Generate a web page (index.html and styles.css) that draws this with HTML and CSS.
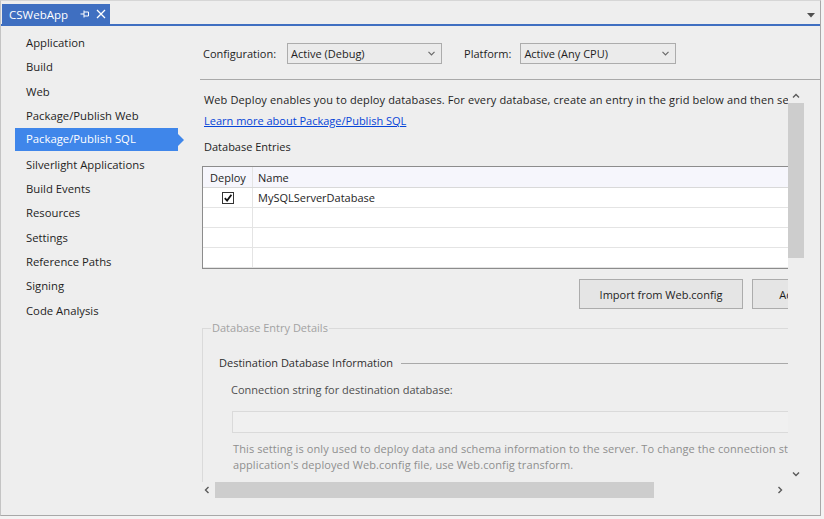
FILE: index.html
```html
<!DOCTYPE html>
<html>
<head>
<meta charset="utf-8">
<link rel="stylesheet" href="styles.css">
</head>
<body>
<div class="window">
  <div class="tabstrip">
    <div class="tab">
      <span class="tab-title">CSWebApp</span>
      <svg class="tab-pin" width="10" height="10" viewBox="0 0 10 10"><path d="M0.5 5h3.5M4 1.5v7M4 3h4.5v4H4" fill="none" stroke="#fff" stroke-width="1"/></svg>
      <svg class="tab-close" width="10" height="10" viewBox="0 0 10 10"><path d="M1 1l8 8M9 1l-8 8" fill="none" stroke="#fff" stroke-width="1.3"/></svg>
    </div>
    <div class="tabstrip-fill"></div>
    <svg class="tab-menu" width="8" height="5" viewBox="0 0 8 5"><path d="M0 0h8L4 4.5z" fill="#505050"/></svg>
  </div>
  <div class="body">
    <nav class="nav">
      <div class="nav-item">Application</div>
      <div class="nav-item">Build</div>
      <div class="nav-item">Web</div>
      <div class="nav-item">Package/Publish Web</div>
      <div class="nav-item selected">Package/Publish SQL</div>
      <div class="nav-item">Silverlight Applications</div>
      <div class="nav-item">Build Events</div>
      <div class="nav-item">Resources</div>
      <div class="nav-item">Settings</div>
      <div class="nav-item">Reference Paths</div>
      <div class="nav-item">Signing</div>
      <div class="nav-item">Code Analysis</div>
    </nav>
    <main class="main">
      <div class="config">
        <span class="config-label">Configuration:</span>
        <div class="select select-config"><span>Active (Debug)</span><svg width="7" height="5" viewBox="0 0 7 5"><path d="M0.5 0.8l3 3 3-3" fill="none" stroke="#6a6a6a" stroke-width="1.2"/></svg></div>
        <span class="config-label platform">Platform:</span>
        <div class="select select-platform"><span>Active (Any CPU)</span><svg width="7" height="5" viewBox="0 0 7 5"><path d="M0.5 0.8l3 3 3-3" fill="none" stroke="#6a6a6a" stroke-width="1.2"/></svg></div>
      </div>
      <div class="separator"></div>
      <div class="scroller">
        <div class="viewport">
          <div class="content">
            <p class="intro">Web Deploy enables you to deploy databases. For every database, create an entry in the grid below and then set its properties below.</p>
            <a class="learn" href="#">Learn more about Package/Publish SQL</a>
            <p class="section-title">Database Entries</p>
            <div class="grid">
              <div class="grid-row grid-head"><div class="c-deploy">Deploy</div><div class="c-name">Name</div></div>
              <div class="grid-row"><div class="c-deploy"><span class="check"><svg width="10" height="10" viewBox="0 0 10 10"><path d="M1.8 5.2l2.3 2.4L8.4 1.8" fill="none" stroke="#111" stroke-width="1.8"/></svg></span></div><div class="c-name">MySQLServerDatabase</div></div>
              <div class="grid-row"><div class="c-deploy"></div><div class="c-name"></div></div>
              <div class="grid-row"><div class="c-deploy"></div><div class="c-name"></div></div>
              <div class="grid-row"><div class="c-deploy"></div><div class="c-name"></div></div>
            </div>
            <div class="buttons">
              <button class="btn btn-import">Import from Web.config</button>
              <button class="btn btn-add">Add</button>
            </div>
            <fieldset class="details">
              <legend>Database Entry Details</legend>
              <div class="sub-head"><span>Destination Database Information</span><span class="sub-line"></span></div>
              <p class="conn-label">Connection string for destination database:</p>
              <div class="conn-input"></div>
              <p class="help">This setting is only used to deploy data and schema information to the server. To change the connection string in the<br>application's deployed Web.config file, use Web.config transform.</p>
            </fieldset>
          </div>
        </div>
        <div class="vscroll">
          <svg class="arrow" width="8" height="6" viewBox="0 0 8 6"><path d="M1 4.5l3-3 3 3" fill="none" stroke="#5a5a5a" stroke-width="1.4"/></svg>
          <div class="vthumb"></div>
          <div class="vspace"></div>
          <svg class="arrow" width="8" height="6" viewBox="0 0 8 6"><path d="M1 1.5l3 3 3-3" fill="none" stroke="#5a5a5a" stroke-width="1.4"/></svg>
        </div>
        <div class="hscroll">
          <svg class="harrow" width="6" height="8" viewBox="0 0 6 8"><path d="M4.5 1l-3 3 3 3" fill="none" stroke="#5a5a5a" stroke-width="1.4"/></svg>
          <div class="hthumb"></div>
          <div class="hspace"></div>
          <svg class="harrow" width="6" height="8" viewBox="0 0 6 8"><path d="M1.5 1l3 3-3 3" fill="none" stroke="#5a5a5a" stroke-width="1.4"/></svg>
        </div>
        <div class="corner"></div>
      </div>
    </main>
  </div>
</div>
</body>
</html>
```
FILE: styles.css
```css
html, body {
  margin: 0;
  padding: 0;
  background: #f3f3f3;
}
body {
  font-family: "Open Sans", "Liberation Sans", sans-serif;
  font-size: 11px;
  color: #1e1e1e;
}
p { margin: 0; }

.window {
  box-sizing: border-box;
  width: 821px;
  height: 516px;
  border-top: 1px solid #d6d6d6;
  border-left: 1px solid #c4c4c4;
  border-right: 1px solid #a8a8a8;
  border-bottom: 1px solid #a8a8a8;
  background: #eeeeee;
  display: flex;
  flex-direction: column;
  overflow: hidden;
}

/* tab strip */
.tabstrip {
  display: flex;
  align-items: flex-end;
  height: 20px;
  padding: 3px 0 0 1px;
  border-bottom: 2px solid #3f6fc1;
  flex-shrink: 0;
}
.tab {
  width: 108px;
  height: 20px;
  background: #3f6fc1;
  color: #fff;
  display: flex;
  align-items: center;
  font-size: 11.5px;
}
.tab-title { margin-left: 7px; }
.tab-pin { margin-left: 12px; }
.tab-close { margin-left: 6px; }
.tabstrip-fill { flex: 1; }
.tab-menu { align-self: center; margin: 3px 5px 0 0; }

/* body */
.body {
  flex: 1;
  display: flex;
  min-height: 0;
}

/* navigation */
.nav {
  width: 189px;
  flex-shrink: 0;
  padding-top: 5px;
  font-size: 11.3px;
}
.nav-item {
  position: relative;
  height: 24.35px;
  line-height: 24px;
  margin-left: 14px;
  width: 163px;
  padding-left: 11px;
  box-sizing: border-box;
  color: #1e1e1e;
  white-space: nowrap;
}
.nav-item.selected {
  background: #3f86ea;
  color: #fff;
  height: 23px;
  line-height: 22px;
  margin-top: 0;
  margin-bottom: 1.35px;
}
.nav-item.selected::after {
  content: "";
  position: absolute;
  right: -6px;
  top: 5.5px;
  border-top: 6px solid transparent;
  border-bottom: 6px solid transparent;
  border-left: 6px solid #3f86ea;
}

/* main */
.main {
  flex: 1;
  padding-left: 10px;
  min-width: 0;
}
.config {
  display: flex;
  align-items: center;
  height: 21px;
  padding: 17px 0 0 3px;
}
.config-label { margin-right: 11px; }
.config-label.platform { margin-left: 22px; margin-right: 9px; }
.select {
  box-sizing: border-box;
  height: 21px;
  border: 1px solid #acacac;
  background: #ebebeb;
  display: flex;
  align-items: center;
  justify-content: space-between;
  padding: 0 6px 0 3px;
}
.select-config { width: 155px; }
.select-platform { width: 156px; }

.separator {
  margin-top: 15px;
  border-top: 1px solid #a9a9a9;
}

/* scroller */
.scroller {
  margin-top: 8px;
  width: 604px;
  height: 410px;
  display: grid;
  grid-template-columns: 588px 16px;
  grid-template-rows: 394px 16px;
}
.viewport {
  overflow: hidden;
  position: relative;
}
.content {
  width: 720px;
  padding-top: 4px;
}
.intro {
  margin-left: 4px;
  line-height: 16px;
  white-space: nowrap;
  letter-spacing: 0.13px;
}
.learn {
  display: inline-block;
  margin: 5px 0 0 4px;
  line-height: 16px;
  color: #0645d8;
  text-decoration: underline;
}
.section-title {
  margin: 10px 0 0 4px;
  line-height: 16px;
}

/* grid */
.grid {
  margin: 11px 0 0 2px;
  width: 710px;
  height: 103px;
  box-sizing: border-box;
  border: 1px solid #8c8c8c;
  background: #fff;
}
.grid-row {
  display: flex;
  height: 19px;
  border-bottom: 1px solid #e4e4e4;
}
.grid-row.grid-head {
  height: 20px;
  background: #f6f6fc;
  border-bottom: 1px solid #d9d9d9;
}
.c-deploy {
  width: 49px;
  border-right: 1px solid #e4e4e4;
  display: flex;
  align-items: center;
  justify-content: center;
}
.grid-head .c-deploy { justify-content: flex-start; padding-left: 7px; width: 42px; }
.c-name {
  flex: 1;
  padding-left: 5px;
  display: flex;
  align-items: center;
}
.check {
  box-sizing: border-box;
  width: 12px;
  height: 12px;
  border: 1px solid #333;
  background: #fff;
  display: flex;
  align-items: center;
  justify-content: center;
  margin-left: 1px;
}

/* buttons */
.buttons {
  display: flex;
  gap: 9px;
  margin: 10px 0 0 379px;
}
.btn {
  height: 30px;
  border: 1px solid #acacac;
  background: #e5e5e5;
  font-family: inherit;
  font-size: 11px;
  color: #1e1e1e;
  padding: 0;
}
.btn-import { width: 164px; }
.btn-add { width: 75px; }

/* details */
.details {
  margin: 12px 0 0 2px;
  padding: 0 0 0 8px;
  width: 700px;
  height: 200px;
  box-sizing: border-box;
  border: 1px solid #dadada;
}
.details legend {
  padding: 0 1px;
  margin-left: 0;
  color: #a2a2a2;
  line-height: 14px;
}
.sub-head {
  display: flex;
  align-items: center;
  margin: 20px 0 0 8px;
  line-height: 16px;
  color: #2e2e2e;
}
.sub-line {
  flex: 1;
  border-top: 1px solid #a9a9a9;
  margin-left: 8px;
}
.conn-label {
  margin: 11px 0 0 20px;
  line-height: 16px;
  color: #4e4e4e;
}
.conn-input {
  margin: 13px 0 0 21px;
  height: 22px;
  box-sizing: border-box;
  border: 1px solid #dadada;
  background: #f0f0f0;
}
.help {
  margin: 8px 0 0 22px;
  line-height: 16px;
  color: #8f8f8f;
  white-space: nowrap;
  letter-spacing: 0.1px;
}

/* scrollbars */
.vscroll {
  display: flex;
  flex-direction: column;
  align-items: center;
  background: #eeeeee;
}
.vscroll .arrow { margin-top: 5px; flex-shrink: 0; }
.vthumb {
  margin-top: 4px;
  width: 16px;
  height: 155px;
  background: #cdcdcd;
}
.vspace { flex: 1; }
.vscroll .arrow:last-child { margin: 0 0 5px 0; }
.hscroll {
  display: flex;
  align-items: center;
  background: #eeeeee;
}
.harrow { flex-shrink: 0; margin-left: 4px; }
.hthumb {
  margin-left: 5px;
  width: 439px;
  height: 16px;
  background: #cdcdcd;
}
.hspace { flex: 1; }
.hscroll .harrow:last-child { margin: 0 5px 0 0; }
.corner { background: #eeeeee; }
```
